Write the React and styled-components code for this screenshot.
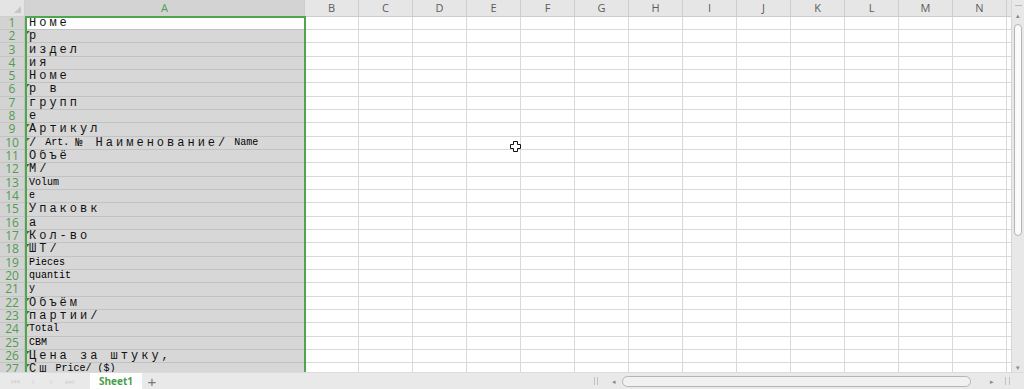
import styled, { createGlobalStyle } from "styled-components";

const GlobalStyle = createGlobalStyle`
  html, body {
    margin: 0;
    padding: 0;
    overflow: hidden;
    background: #fff;
  }
  body {
    font-family: "Open Sans", "Liberation Sans", sans-serif;
  }
`;

const COLS = ["B", "C", "D", "E", "F", "G", "H", "I", "J", "K", "L", "M", "N", "O"];

// each row of column A: text pieces, "w" = wide cyrillic look, "n" = narrow latin
const ROWS = [
  { parts: [["Номе", "w"]] },
  { parts: [["р", "w"]], flag: true },
  { parts: [["издел", "w"]] },
  { parts: [["ия", "w"]] },
  { parts: [["Номе", "w"]] },
  { parts: [["р в", "w"]], flag: true },
  { parts: [["групп", "w"]] },
  { parts: [["е", "w"]] },
  { parts: [["Артикул", "w"]], flag: true },
  {
    parts: [
      ["/", "w"],
      [" Art. ", "n"],
      ["№ Наименование/", "w"],
      [" Name", "n"],
    ],
    flag: true,
  },
  { parts: [["Объё", "w"]] },
  { parts: [["М/", "w"]], flag: true },
  { parts: [["Volum", "n"]] },
  { parts: [["e", "n"]] },
  { parts: [["Упаковк", "w"]] },
  { parts: [["а", "w"]] },
  { parts: [["Кол-во", "w"]], flag: true },
  { parts: [["ШТ/", "w"]], flag: true },
  { parts: [["Pieces", "n"]] },
  { parts: [["quantit", "n"]] },
  { parts: [["y", "n"]] },
  { parts: [["Объём", "w"]], flag: true },
  { parts: [["партии/", "w"]], flag: true },
  { parts: [["Total", "n"]], flag: true },
  { parts: [["CBM", "n"]] },
  { parts: [["Цена за штуку,", "w"]], flag: true },
  { parts: [["Сш", "w"], [" Price/ ($)", "n"]], flag: true },
];

function App() {
  return (
    <>
      <GlobalStyle />
      <Window>
        <Main>
          <SheetArea>
            <Grid>
              <Corner />
              <ColHead active>A</ColHead>
              {COLS.map((c) => (
                <ColHead key={c}>{c}</ColHead>
              ))}
              {ROWS.map((row, i) => (
                <Row key={i} index={i} row={row} />
              ))}
            </Grid>
            <Selection />
            <Cursor viewBox="0 0 11 11">
              <path
                d="M3.5 0.5h4v3h3v4h-3v3h-4v-3h-3v-4h3z"
                fill="#fff"
                stroke="#111"
                strokeWidth="1"
              />
            </Cursor>
          </SheetArea>
          <VScroll>
            <SplitMark />
            <Arrow>▴</Arrow>
            <VThumb />
            <VSpacer />
            <Arrow>▾</Arrow>
          </VScroll>
        </Main>
        <BottomBar>
          <NavGroup>
            <NavBtn>⏮</NavBtn>
            <NavBtn>‹</NavBtn>
            <NavBtn>›</NavBtn>
            <NavBtn>⏭</NavBtn>
          </NavGroup>
          <SheetTab>Sheet1</SheetTab>
          <AddSheet>+</AddSheet>
          <HScroll>
            <Splitter />
            <HArrow>◂</HArrow>
            <HThumb />
            <HArrow>▸</HArrow>
            <Splitter double />
          </HScroll>
        </BottomBar>
      </Window>
    </>
  );
}

function Row({ index, row }) {
  return (
    <>
      <RowHead>{index + 1}</RowHead>
      <ACell active={index === 0} flag={row.flag}>
        {row.parts.map(([text, kind], k) =>
          kind === "w" ? <Wide key={k}>{text}</Wide> : <Narrow key={k}>{text}</Narrow>
        )}
      </ACell>
      {COLS.map((c) => (
        <Cell key={c} />
      ))}
    </>
  );
}

const Window = styled.div`
  width: 1024px;
  height: 389px;
  display: flex;
  flex-direction: column;
  overflow: hidden;
`;

const Main = styled.div`
  display: flex;
  height: 372px;
`;

const SheetArea = styled.div`
  position: relative;
  flex: 1;
  overflow: hidden;
`;

const Grid = styled.div`
  display: grid;
  grid-template-columns: 25px 280px repeat(14, 54px);
  grid-template-rows: 16.7px repeat(27, 13.333px);
`;

const Corner = styled.div`
  position: relative;
  background: #e4e4e4;
  border-right: 1px solid #cfcfcf;
  border-bottom: 1px solid #cfcfcf;
  box-sizing: border-box;

  &::after {
    content: "";
    position: absolute;
    right: 3px;
    bottom: 3px;
    border-left: 7px solid transparent;
    border-bottom: 7px solid #c6c6c6;
  }
`;

const ColHead = styled.div`
  box-sizing: border-box;
  background: ${(p) => (p.active ? "#d3d3d3" : "#e6e6e6")};
  color: ${(p) => (p.active ? "#4f9d4f" : "#5c5c5c")};
  border-right: 1px solid #cdcdcd;
  border-bottom: 1px solid #cdcdcd;
  font-size: 11px;
  display: flex;
  align-items: center;
  justify-content: center;
`;

const RowHead = styled.div`
  box-sizing: border-box;
  background: #d3d3d3;
  color: #4f9d4f;
  border-right: 1px solid #c4c4c4;
  border-bottom: 1px solid #c4c4c4;
  font-size: 12px;
  display: flex;
  align-items: center;
  justify-content: center;
  line-height: 1;
`;

const ACell = styled.div`
  position: relative;
  box-sizing: border-box;
  background: ${(p) => (p.active ? "#fff" : "#d7d7d7")};
  border-bottom: 1px solid #c2c2c2;
  padding-left: 4px;
  display: flex;
  align-items: center;
  white-space: pre;
  overflow: hidden;
  color: #111;

  &::before {
    content: "";
    display: ${(p) => (p.flag ? "block" : "none")};
    position: absolute;
    left: 2px;
    top: 1px;
    border-top: 3px solid #2f7d32;
    border-right: 3px solid transparent;
  }
`;

const Wide = styled.span`
  font-family: "Liberation Mono", "DejaVu Sans Mono", monospace;
  font-size: 12px;
  letter-spacing: 3px;
  line-height: 1;
`;

const Narrow = styled.span`
  font-family: "Liberation Mono", "DejaVu Sans Mono", monospace;
  font-size: 10px;
  line-height: 1;
  color: #000;
`;

const Cell = styled.div`
  box-sizing: border-box;
  background: #fff;
  border-right: 1px solid #d9d9d9;
  border-bottom: 1px solid #d9d9d9;
`;

const Selection = styled.div`
  position: absolute;
  left: 25px;
  top: 16px;
  width: 281px;
  height: 400px;
  box-sizing: border-box;
  border: 2px solid #4ea64e;
  pointer-events: none;
`;

const Cursor = styled.svg`
  position: absolute;
  left: 510px;
  top: 141px;
  width: 11px;
  height: 11px;
`;

const VScroll = styled.div`
  width: 12px;
  background: #e8e8e8;
  border-left: 1px solid #d6d6d6;
  display: flex;
  flex-direction: column;
  align-items: center;
`;

const SplitMark = styled.div`
  width: 7px;
  height: 1px;
  margin-top: 5px;
  margin-bottom: 6px;
  background: #b8b8b8;
`;

const Arrow = styled.div`
  font-size: 7px;
  line-height: 8px;
  height: 8px;
  color: #8a8a8a;
`;

const VThumb = styled.div`
  width: 8px;
  height: 212px;
  margin-top: 4px;
  box-sizing: border-box;
  border: 1px solid #b4b4b4;
  border-radius: 4px;
  background: #fbfbfb;
`;

const VSpacer = styled.div`
  flex: 1;
`;

const BottomBar = styled.div`
  height: 17px;
  display: flex;
  align-items: stretch;
  background: #e9e9e9;
  border-top: 1px solid #dcdcdc;
  box-sizing: border-box;
`;

const NavGroup = styled.div`
  display: flex;
  align-items: center;
  gap: 6px;
  padding-left: 9px;
  width: 90px;
  box-sizing: border-box;
`;

const NavBtn = styled.span`
  font-size: 10px;
  color: #d6d6d6;
  width: 12px;
  text-align: center;
`;

const SheetTab = styled.div`
  width: 52px;
  background: #fff;
  color: #47a047;
  font-weight: bold;
  font-size: 10px;
  display: flex;
  align-items: center;
  justify-content: center;
`;

const AddSheet = styled.div`
  width: 20px;
  color: #777;
  font-size: 15px;
  display: flex;
  align-items: center;
  justify-content: center;
  font-family: "Liberation Sans", sans-serif;
`;

const HScroll = styled.div`
  margin-left: auto;
  width: 430px;
  display: flex;
  align-items: center;
`;

const Splitter = styled.div`
  width: ${(p) => (p.double ? "3px" : "2px")};
  height: 8px;
  border-left: 1px solid #c2c2c2;
  border-right: 1px solid #c2c2c2;
  margin: 0 12px 0 ${(p) => (p.double ? "9px" : "0")};
`;

const HArrow = styled.div`
  font-size: 7px;
  color: #8a8a8a;
  width: 8px;
  text-align: center;
`;

const HThumb = styled.div`
  width: 349px;
  height: 11px;
  margin: 0 17px 0 4px;
  box-sizing: border-box;
  border: 1px solid #b4b4b4;
  border-radius: 6px;
  background: #f1f1f1;
`;

export default App;
